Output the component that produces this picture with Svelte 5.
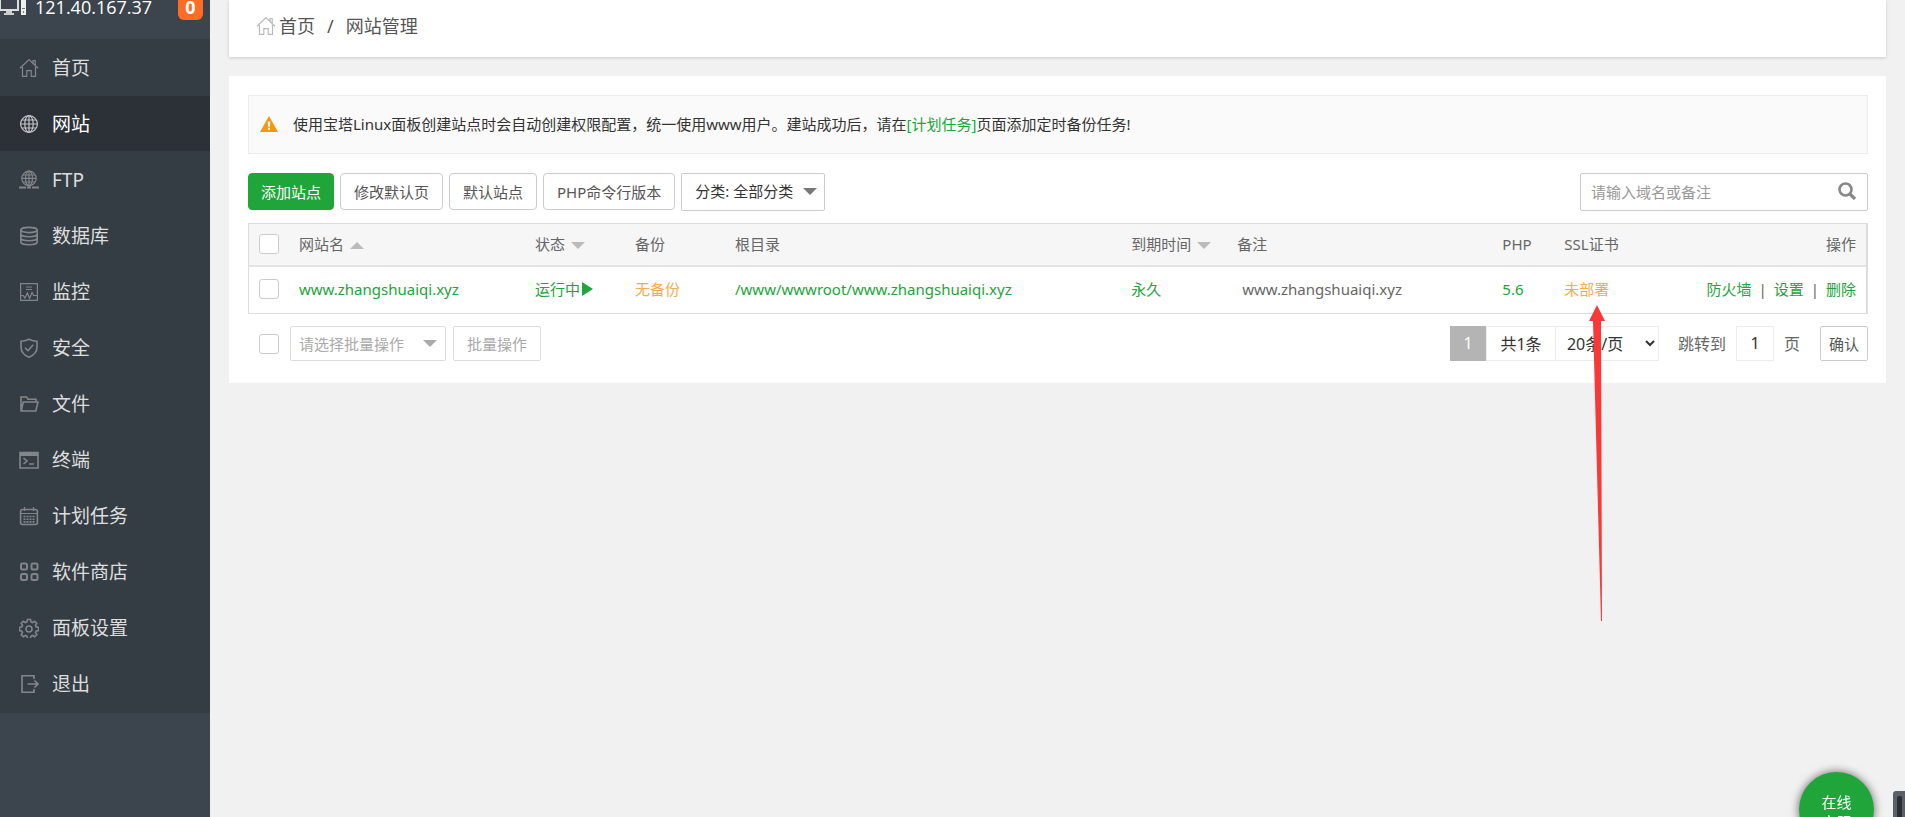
<script>
	const menu = [
		{ name: '首页', icon: 'home' },
		{ name: '网站', icon: 'site' },
		{ name: 'FTP', icon: 'ftp' },
		{ name: '数据库', icon: 'database' },
		{ name: '监控', icon: 'control' },
		{ name: '安全', icon: 'firewall' },
		{ name: '文件', icon: 'files' },
		{ name: '终端', icon: 'xterm' },
		{ name: '计划任务', icon: 'crontab' },
		{ name: '软件商店', icon: 'soft' },
		{ name: '面板设置', icon: 'config' },
		{ name: '退出', icon: 'exit' }
	];

	const sites = [
		{
			name: 'www.zhangshuaiqi.xyz',
			status: '运行中',
			backup: '无备份',
			path: '/www/wwwroot/www.zhangshuaiqi.xyz',
			expires: '永久',
			note: 'www.zhangshuaiqi.xyz',
			php: '5.6',
			ssl: '未部署'
		}
	];

	let active = $state('site');
	let checked = $state([false]);
	let keyword = $state('');
	let page = $state('1');

	let allChecked = $derived(checked.every(Boolean));

	function toggleAll(e) {
		checked = sites.map(() => e.target.checked);
	}
</script>

{#snippet icon(name)}
	<svg class="icon" viewBox="0 0 20 20" aria-hidden="true">
		{#if name === 'home'}
			<path d="M1 10.2 10 1.5l9 8.7M14 5V2.5h2.2V7M3.5 9v9.3h4.3v-5.6h4.4v5.6h4.3V9" />
		{:else if name === 'site'}
			<circle cx="10" cy="10" r="8.4" />
			<ellipse cx="10" cy="10" rx="4.2" ry="8.4" />
			<path d="M10 1.6v16.8M1.6 10h16.8M3 6h14M3 14h14" />
		{:else if name === 'ftp'}
			<circle cx="10" cy="8.4" r="7.2" />
			<ellipse cx="10" cy="8.4" rx="3.5" ry="7.2" />
			<path d="M10 1.2v16M2.8 8.4h14.4M4 5h12M4 12h12" />
			<path class="thick" d="M0 17.6h7M13 17.6h7M8 17.6h4" />
		{:else if name === 'database'}
			<g class="mid">
				<ellipse cx="10" cy="4" rx="8.2" ry="2.6" />
				<path d="M1.8 4v12c0 1.6 3.6 2.8 8.2 2.8s8.2-1.2 8.2-2.800V4M1.800 8c0 1.600 3.600 2.800 8.200 2.800s8.200-1.200 8.200-2.800M1.800 12c0 1.600 3.600 2.800 8.200 2.800s8.200-1.200 8.200-2.800" />
			</g>
		{:else if name === 'control'}
			<path d="M1.6 1.6h16.8v16.8H1.6zM7 5h6M7 7.5h6M1.6 13.5h2.6l1.6 2.5 2.6-5 2.2 5.5 2.4-6 1.6 3h3.8" />
		{:else if name === 'firewall'}
			<path class="mid" d="M10 1.200c2.800 1.400 5.300 2 8 2v6c0 5-3.300 8-8 10-4.700-2-8-5-8-10v-6c2.700 0 5.200-.6 8-2zM6 9.700l3 3 5.200-6" />
		{:else if name === 'files'}
			<path class="mid" d="M4.500 17 2 16V3h5.500l1.500 2.200h8V8M4.300 8H19l-2.200 9H2.200z" />
		{:else if name === 'xterm'}
			<path class="mid" d="M1 2.500h18v15.500H1zM4.500 8l3.500 3-3.500 3M10 14h5" />
			<path class="fill" d="M1 2h18v4H1z" />
		{:else if name === 'crontab'}
			<rect class="mid" x="1.600" y="3.500" width="16.800" height="15" rx="2" />
			<path d="M2 7.500h16M5.500 1v4M14.500 1v4" />
			<path class="dots" d="M4.500 10.500h11M4.500 13.200h11M4.500 15.900h11" />
		{:else if name === 'soft'}
			<g class="thick">
				<rect x="2" y="1.500" width="6" height="6" rx="1.500" />
				<rect x="12.500" y="1.500" width="6" height="6" rx="1.500" />
				<rect x="2" y="12" width="6" height="6" rx="1.500" />
				<rect x="12.500" y="12" width="6" height="6" rx="1.500" />
			</g>
		{:else if name === 'config'}
			<path class="mid" d="M8.500 1.500h3l.6 2.400 1.500.6 2.100-1.300 2.100 2.100-1.300 2.100.6 1.500 2.400.6v3l-2.400.6-.6 1.500 1.300 2.100-2.100 2.100-2.100-1.300-1.500.6-.6 2.400h-3l-.6-2.400-1.500-.6-2.100 1.300-2.100-2.100 1.300-2.100-.6-1.500-2.400-.6v-3l2.400-.6.6-1.500L2.200 5.300l2.100-2.100 2.100 1.300 1.500-.6z" />
			<circle class="mid" cx="10" cy="11" r="3" />
		{:else if name === 'exit'}
			<path class="mid" d="M15 5V1.800H3v16.400h12V15M8.500 10H19M15.500 6.500 19 10l-3.500 3.500" />
		{/if}
	</svg>
{/snippet}

<div class="layout">
	<aside class="sidebar">
		<div class="server">
			<svg class="monitor" viewBox="0 0 27 20" aria-hidden="true">
				<path d="M0 2h18v11H0z" fill="none" stroke="#ddd" stroke-width="2" />
				<path d="M6 14h6v2h2v2H4v-2h2z" fill="#ccc" />
				<path d="M21 2h5v16h-5z" fill="#eee" />
				<path d="M22 11h3v1h-3zM23 14h1v2h-1z" fill="#777" />
			</svg>
			<span class="ip">121.40.167.37</span>
			<span class="badge">0</span>
		</div>
		<nav class="menu">
			{#each menu as item (item.icon)}
				<a
					href="#{item.icon}"
					class:active={active === item.icon}
					onclick={() => (active = item.icon)}
				>
					{@render icon(item.icon)}
					<span>{item.name}</span>
				</a>
			{/each}
		</nav>
	</aside>

	<main class="main">
		<div class="crumbs">
			{@render icon('home')}
			<a href="#home">首页</a>
			<span class="slash">/</span>
			<span>网站管理</span>
		</div>

		<section class="panel">
			<div class="notice">
				<svg class="warn" viewBox="0 0 18 16" aria-hidden="true">
					<path d="M9 0l9 16H0z" fill="#f7960f" />
					<path d="M7.700 5.500h2.600l-.5 5.300H8.200zM8 11.800h2v2H8z" fill="#fff" />
				</svg>
				<p>使用宝塔Linux面板创建站点时会自动创建权限配置，统一使用www用户。建站成功后，请在<a href="#crontab">[计划任务]</a>页面添加定时备份任务!</p>
			</div>

			<div class="toolbar">
				<button class="btn primary">添加站点</button>
				<button class="btn">修改默认页</button>
				<button class="btn">默认站点</button>
				<button class="btn">PHP命令行版本</button>
				<button class="btn category">分类: 全部分类 <i class="caret"></i></button>
				<div class="search">
					<input type="text" placeholder="请输入域名或备注" aria-label="请输入域名或备注" bind:value={keyword} />
					<button aria-label="搜索">
						<svg viewBox="0 0 18 18" aria-hidden="true">
							<circle cx="7.500" cy="7.500" r="6" fill="none" stroke="#888" stroke-width="2.600" />
							<path d="M12 12l5 5" stroke="#888" stroke-width="3.200" />
						</svg>
					</button>
				</div>
			</div>

			<table>
				<colgroup>
					<col class="c-check" />
					<col class="c-name" />
					<col class="c-short" />
					<col class="c-short" />
					<col class="c-path" />
					<col class="c-date" />
					<col class="c-note" />
					<col class="c-php" />
					<col class="c-short" />
					<col />
				</colgroup>
				<thead>
					<tr>
						<th><input type="checkbox" aria-label="全选" checked={allChecked} onchange={toggleAll} /></th>
						<th>网站名<i class="caret up"></i></th>
						<th>状态<i class="caret"></i></th>
						<th>备份</th>
						<th>根目录</th>
						<th>到期时间<i class="caret"></i></th>
						<th>备注</th>
						<th>PHP</th>
						<th>SSL证书</th>
						<th class="right">操作</th>
					</tr>
				</thead>
				<tbody>
					{#each sites as site, i (site.name)}
						<tr>
							<td><input type="checkbox" aria-label={site.name} bind:checked={checked[i]} /></td>
							<td><a href="#site">{site.name}</a></td>
							<td><a href="#status">{site.status}<i class="play"></i></a></td>
							<td><a class="orange" href="#backup">{site.backup}</a></td>
							<td><a href="#path">{site.path}</a></td>
							<td><a href="#expires">{site.expires}</a></td>
							<td class="note">{site.note}</td>
							<td><a href="#php">{site.php}</a></td>
							<td class="ssl">
								<a class="orange" href="#ssl">{site.ssl}</a>
								<svg class="arrow" viewBox="0 0 16 317" aria-hidden="true">
									<path d="M8 0l8 16h-4l1 300h-1L4 16H0z" fill="#fb3838" />
								</svg>
							</td>
							<td class="right actions">
								<a href="#firewall">防火墙</a><span>|</span><a href="#set">设置</a><span>|</span><a href="#del">删除</a>
							</td>
						</tr>
					{/each}
				</tbody>
			</table>

			<div class="footer">
				<input type="checkbox" aria-label="全选" checked={allChecked} onchange={toggleAll} />
				<button class="btn batch batch-select">请选择批量操作 <i class="caret"></i></button>
				<button class="btn batch">批量操作</button>

				<div class="pager">
					<span class="current">1</span>
					<span class="total">共1条</span>
					<select aria-label="每页条数">
						<option>20条/页</option>
						<option>50条/页</option>
						<option>100条/页</option>
					</select>
					<label for="jump">跳转到</label>
					<input id="jump" type="text" bind:value={page} />
					<span class="unit">页</span>
					<button class="btn confirm">确认</button>
				</div>
			</div>
		</section>
	</main>
</div>

<a class="service" href="#service">在线<br />客服</a>
<div class="dock"><i></i></div>

<style>
:global(body) {
  background: #f1f1f1;
  overflow: hidden;
}
.layout, .service {
  font-family: "Noto Sans", "Noto Sans CJK SC", sans-serif;
  font-size: 15px;
  line-height: 20px;
}
.layout {
  display: flex;
  min-height: 100vh;
  color: #666;
}
.layout * {
  box-sizing: border-box;
}
a {
  color: #20a53a;
  text-decoration: none;
}
button, input, select {
  font: inherit;
  color: inherit;
  margin: 0;
}
.icon {
  width: 20px;
  height: 20px;
  flex: none;
  fill: none;
  stroke: currentColor;
  stroke-width: 1.2;
}
.icon .mid {
  stroke-width: 1.6;
}
.icon .thick {
  stroke-width: 2;
}
.icon .fill {
  fill: currentColor;
  stroke: none;
}
.icon .dots {
  stroke-width: 1.6;
  stroke-dasharray: 2 1;
}

/* sidebar */
.sidebar {
  width: 210px;
  flex: none;
  background: #3c444d;
}
.server {
  display: flex;
  align-items: center;
  height: 39px;
  padding: 0 7px 25px 0;
  color: #fff;
  font-family: "Open Sans", sans-serif;
  font-size: 18px;
}
.monitor {
  width: 27px;
  height: 20px;
  margin-right: 8px;
}
.badge {
  min-width: 25px;
  margin-left: auto;
  border-radius: 6px;
  background: #ff6c24;
  font-weight: bold;
  line-height: 26px;
  text-align: center;
}
.menu {
  display: grid;
  grid-auto-rows: 1fr;
  min-height: 674px;
  padding-top: 1px;
  background: #353d44;
}
.menu a {
  display: flex;
  align-items: center;
  gap: 13px;
  padding-left: 19px;
  border-bottom: 1px solid #353d44;
  color: #ddd;
  font-size: 19px;
}
.menu .icon {
  color: #82868a;
}
.menu .active {
  background: #2c3138;
  color: #fff;
}
.menu .active .icon {
  color: #c3c5c8;
}

/* content */
.main {
  flex: 1;
  min-width: 0;
  padding: 0 19px;
}
.crumbs {
  display: flex;
  align-items: center;
  height: 57px;
  padding: 0 27px 6px;
  background: #fff;
  box-shadow: 0 1px 3px rgba(0, 0, 0, 0.16);
  color: #555;
  font-size: 18px;
}
.crumbs a {
  margin-left: 3px;
  color: inherit;
}
.crumbs .icon {
  color: #bbb;
}
.slash {
  padding: 0 12px;
}
.panel {
  margin-top: 19px;
  padding: 19px 18px 22px 19px;
  background: #fff;
}
.notice {
  display: flex;
  align-items: center;
  min-height: 59px;
  padding: 0 11px 2px;
  border: 1px solid #ececec;
  background: #fafafa;
  color: #333;
}
.notice p {
  margin: 0;
}
.warn {
  width: 18px;
  height: 16px;
  margin-right: 15px;
}
.toolbar {
  display: flex;
  align-items: flex-start;
  gap: 6px;
  margin-top: 19px;
}
.btn {
  height: 37px;
  padding: 0 13px;
  border: 1px solid #ccc;
  border-radius: 4px;
  background: #fff;
  color: #555;
  white-space: nowrap;
}
.primary {
  padding: 0 12px;
  border-color: #20a53a;
  background: #20a53a;
  color: #fff;
}
.category {
  display: flex;
  align-items: center;
  gap: 10px;
  height: 38px;
  padding: 0 7px 2px 13px;
  border-radius: 2px;
  color: #333;
}
.caret {
  display: inline-block;
  border: 7px solid transparent;
  border-top-color: #777;
  border-bottom: 0;
}
.search {
  display: flex;
  width: 288px;
  height: 38px;
  margin-left: auto;
  border: 1px solid #ccc;
  border-radius: 2px;
}
.search input {
  flex: 1;
  min-width: 0;
  padding: 0 10px;
  border: 0;
  background: none;
  outline: 0;
}
.search input::placeholder {
  color: #999;
}
.search button {
  padding: 0 11px 2px;
  border: 0;
  background: none;
}
.search svg {
  display: block;
  width: 18px;
  height: 18px;
}
table {
  width: 100%;
  margin-top: 12px;
  border: 1px solid #ddd;
  border-right-width: 2px;
  border-collapse: separate;
  border-spacing: 0;
  table-layout: fixed;
}
.c-check {
  width: 40px;
}
.c-name {
  width: 236px;
}
.c-short {
  width: 100px;
}
.c-path {
  width: 24.5%;
}
.c-date {
  width: 106px;
}
.c-note {
  width: 16.4%;
}
.c-php {
  width: 62px;
}
th, td {
  padding: 0 10px 2px;
  font-weight: normal;
  text-align: left;
  white-space: nowrap;
}
th {
  height: 43px;
  border-bottom: 2px solid #e4e4e4;
  background: #f6f6f6;
}
td {
  height: 46px;
}
.right {
  text-align: right;
}
th .caret {
  margin-left: 6px;
  border-top-color: #bbb;
  vertical-align: 1px;
}
th .caret.up {
  border-top: 0;
  border-bottom: 7px solid #bbb;
}
.play {
  display: inline-block;
  margin-left: 2px;
  border: 7px solid transparent;
  border-left: 11px solid #20a53a;
  border-right: 0;
  vertical-align: -1px;
}
.orange {
  color: #f0ad4e;
}
td.note {
  padding-left: 15px;
}
.ssl {
  position: relative;
}
.arrow {
  position: absolute;
  top: 38px;
  left: 35px;
  width: 16px;
  height: 317px;
}
.actions span {
  padding: 0 7px;
}
input[type="checkbox"] {
  display: block;
  width: 20px;
  height: 20px;
  flex: none;
  appearance: none;
  border: 1px solid #ccc;
  border-radius: 3px;
  background: #fff;
}
input[type="checkbox"]:checked {
  background: #20a53a;
}
.footer {
  display: flex;
  align-items: center;
  margin-top: 12px;
  padding-left: 11px;
}
.batch {
  height: 35px;
  margin-left: 7px;
  border-color: #ddd;
  border-radius: 2px;
  color: #aaa;
}
.batch-select {
  display: flex;
  align-items: center;
  justify-content: space-between;
  width: 156px;
  margin-left: 11px;
  padding: 0 8px;
}
.batch .caret {
  border-top-color: #aaa;
}
.pager {
  display: flex;
  align-items: center;
  margin-left: auto;
  font-size: 16px;
}
.current, .total, .pager select, .pager input {
  height: 35px;
  border: 1px solid #ececec;
  color: #333;
  line-height: 35px;
  background: #fff;
}
.pager .current {
  width: 36px;
  border: 0;
  background: #b4b4b4;
  color: #fff;
  text-align: center;
}
.total {
  width: 70px;
  text-align: center;
}
.pager select {
  width: 104px;
  margin-left: -1px;
  padding: 0 0 0 7px;
  border-radius: 0;
}
.pager label {
  margin: 0 10px 0 19px;
}
.pager input {
  width: 38px;
  text-align: center;
}
.unit {
  margin: 0 20px 0 10px;
}
.confirm {
  width: 48px;
  height: 35px;
  padding: 0;
  border-radius: 2px;
  font-size: 15px;
}

/* floating widgets */
.service {
  position: fixed;
  right: 31px;
  bottom: -30px;
  box-sizing: border-box;
  width: 75px;
  height: 75px;
  padding-top: 20px;
  border-radius: 50%;
  background: #20a53a;
  box-shadow: 0 0 10px rgba(0, 0, 0, 0.6);
  color: #fff;
  text-align: center;
}
.dock {
  position: fixed;
  right: 0;
  bottom: 0;
  width: 12px;
  height: 26px;
  border-radius: 3px 0 0 0;
  background: #5b6068;
}
.dock i {
  display: block;
  width: 5px;
  height: 21px;
  margin: 5px 0 0 4px;
  border-radius: 2px 2px 0 0;
  background: #2b2f36;
}
</style>
